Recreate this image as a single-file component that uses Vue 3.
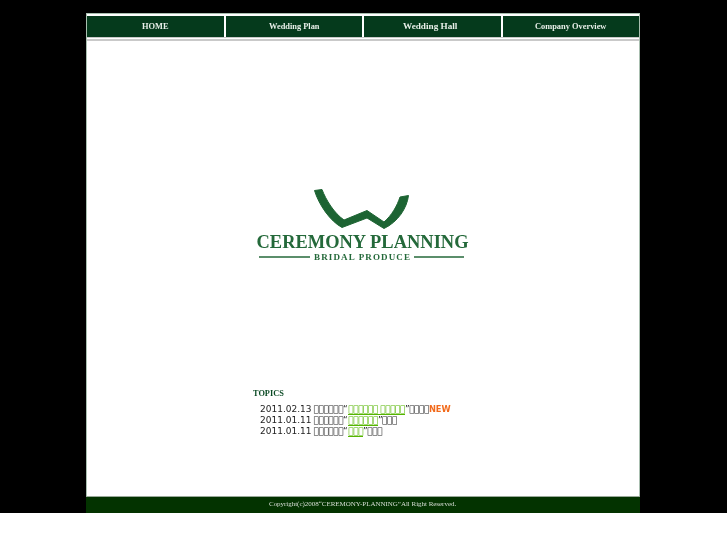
<script setup>
const nav = ['HOME', 'Wedding Plan', 'Wedding Hall', 'Company Overview']
const topics = [
  { date: '2011.02.13', pre: '\uE000\uE000\uE000\uE000\uE000\uE000“', link: '\uE000\uE000\uE000\uE000\uE000\uE000 \uE000\uE000\uE000\uE000\uE000', post: '”\uE000\uE000\uE000\uE000', isNew: true },
  { date: '2011.01.11', pre: '\uE000\uE000\uE000\uE000\uE000\uE000“', link: '\uE000\uE000\uE000\uE000\uE000\uE000', post: '”\uE000\uE000\uE000', isNew: false },
  { date: '2011.01.11', pre: '\uE000\uE000\uE000\uE000\uE000\uE000“', link: '\uE000\uE000\uE000', post: '”\uE000\uE000\uE000', isNew: false }
]
</script>

<template>
  <div class="band">
    <div class="page">
      <nav class="nav">
        <a v-for="n in nav" :key="n" class="nav-item" :class="{ big: n === 'Wedding Hall' }"><span class="label">{{ n }}</span></a>
      </nav>
      <div class="rule"></div>
      <main class="main">
        <svg class="logo" width="224" height="80" viewBox="0 0 224 80">
          <path d="M64.5 7.5 L72 6.5 C76 17 84 30 94 37 L117 27.5 L134 39 C142 32 147 23 150 14 L158.5 12.5 C157 25 148 39 134 45.5 L117 35 L92 44.5 C80 38 69 22 64.5 7.5 Z" fill="#1d6433" stroke="#1d6433" stroke-width="1" stroke-linejoin="round"/>
          <text x="6.5" y="65" class="logo-main" textLength="212" lengthAdjust="spacingAndGlyphs">CEREMONY PLANNING</text>
          <line x1="9" y1="74" x2="60" y2="74" class="logo-line"/>
          <line x1="164" y1="74" x2="214" y2="74" class="logo-line"/>
          <text x="64" y="77" class="logo-sub" textLength="96" lengthAdjust="spacing">BRIDAL PRODUCE</text>
        </svg>
        <section class="topics">
          <h2 class="topics-title">TOPICS</h2>
          <ul class="topic-list">
            <li v-for="(t, i) in topics" :key="i" class="topic">
              <span class="date">{{ t.date }} </span><span class="pre">{{ t.pre }}</span><a class="topic-link">{{ t.link }}</a><span>{{ t.post }}</span><b v-if="t.isNew" class="new">NEW</b>
            </li>
          </ul>
        </section>
      </main>
      <footer class="footer"><span class="label">Copyright(c)2008“CEREMONY-PLANNING”All Right Reserved.</span></footer>
    </div>
  </div>
</template>

<style>
html, body { margin: 0; background: #fff; }
</style>

<style scoped>
.band { background: #000; padding-top: 13px; }
.page { width: 552px; height: 499px; margin-left: 86px; background: #fff; border: 1px solid #a9bfb0; border-bottom: 0; display: flex; flex-direction: column; }
.label { display: inline-block; will-change: transform; }
.nav { display: grid; grid-template-columns: 137px 136px 137px 1fr; gap: 2px; padding: 2px 0 0; height: 20px; box-sizing: content-box; }
.nav-item { background: #053a1c; color: #e8efe9; font: bold 8.4px/21px "Liberation Serif", serif; text-align: center; }
.nav-item.big { font-size: 9.2px; line-height: 20px; padding-right: 4px; }
.rule { margin-top: 1px; height: 1px; border-top: 1px solid #c9c9c9; border-bottom: 2px solid #c9c9c9; }
.main { flex: 1; display: flex; flex-direction: column; align-items: flex-start; padding-left: 166px; padding-top: 142px; }
.logo { display: block; margin-left: -3px; will-change: transform; }
.logo-main { font: bold 19px "Liberation Serif", serif; fill: #24693a; }
.logo-sub { font: bold 9px "Liberation Serif", serif; fill: #24693a; }
.logo-line { stroke: #24693a; stroke-width: 1.3; }
.topics { margin-top: 125px; }
.topics-title { margin: 0; font: bold 8.3px/12px "Liberation Serif", serif; color: #0a4a24; will-change: transform; }
.topic-list { list-style: none; margin: 4px 0 0; padding: 0 0 0 7px; }
.topic { font: 9px/11px "DejaVu Sans", sans-serif; color: #222; white-space: pre; letter-spacing: -.47px; will-change: transform; }
.date { letter-spacing: 0; }
.pre { margin-left: 2px; }
.topic-link { margin-left: 1px; color: #55b500; border-bottom: 1px solid #55b500; }
.new { color: #f26a1b; font-size: 8.3px; letter-spacing: 0; }
.footer { height: 17px; margin: 0 -1px; border-top: 1px solid #9aa99a; box-sizing: border-box; background: #033300; color: #d9dfd6; font: 7px/15px "Liberation Serif", serif; text-align: center; letter-spacing: -.03px; }
</style>
